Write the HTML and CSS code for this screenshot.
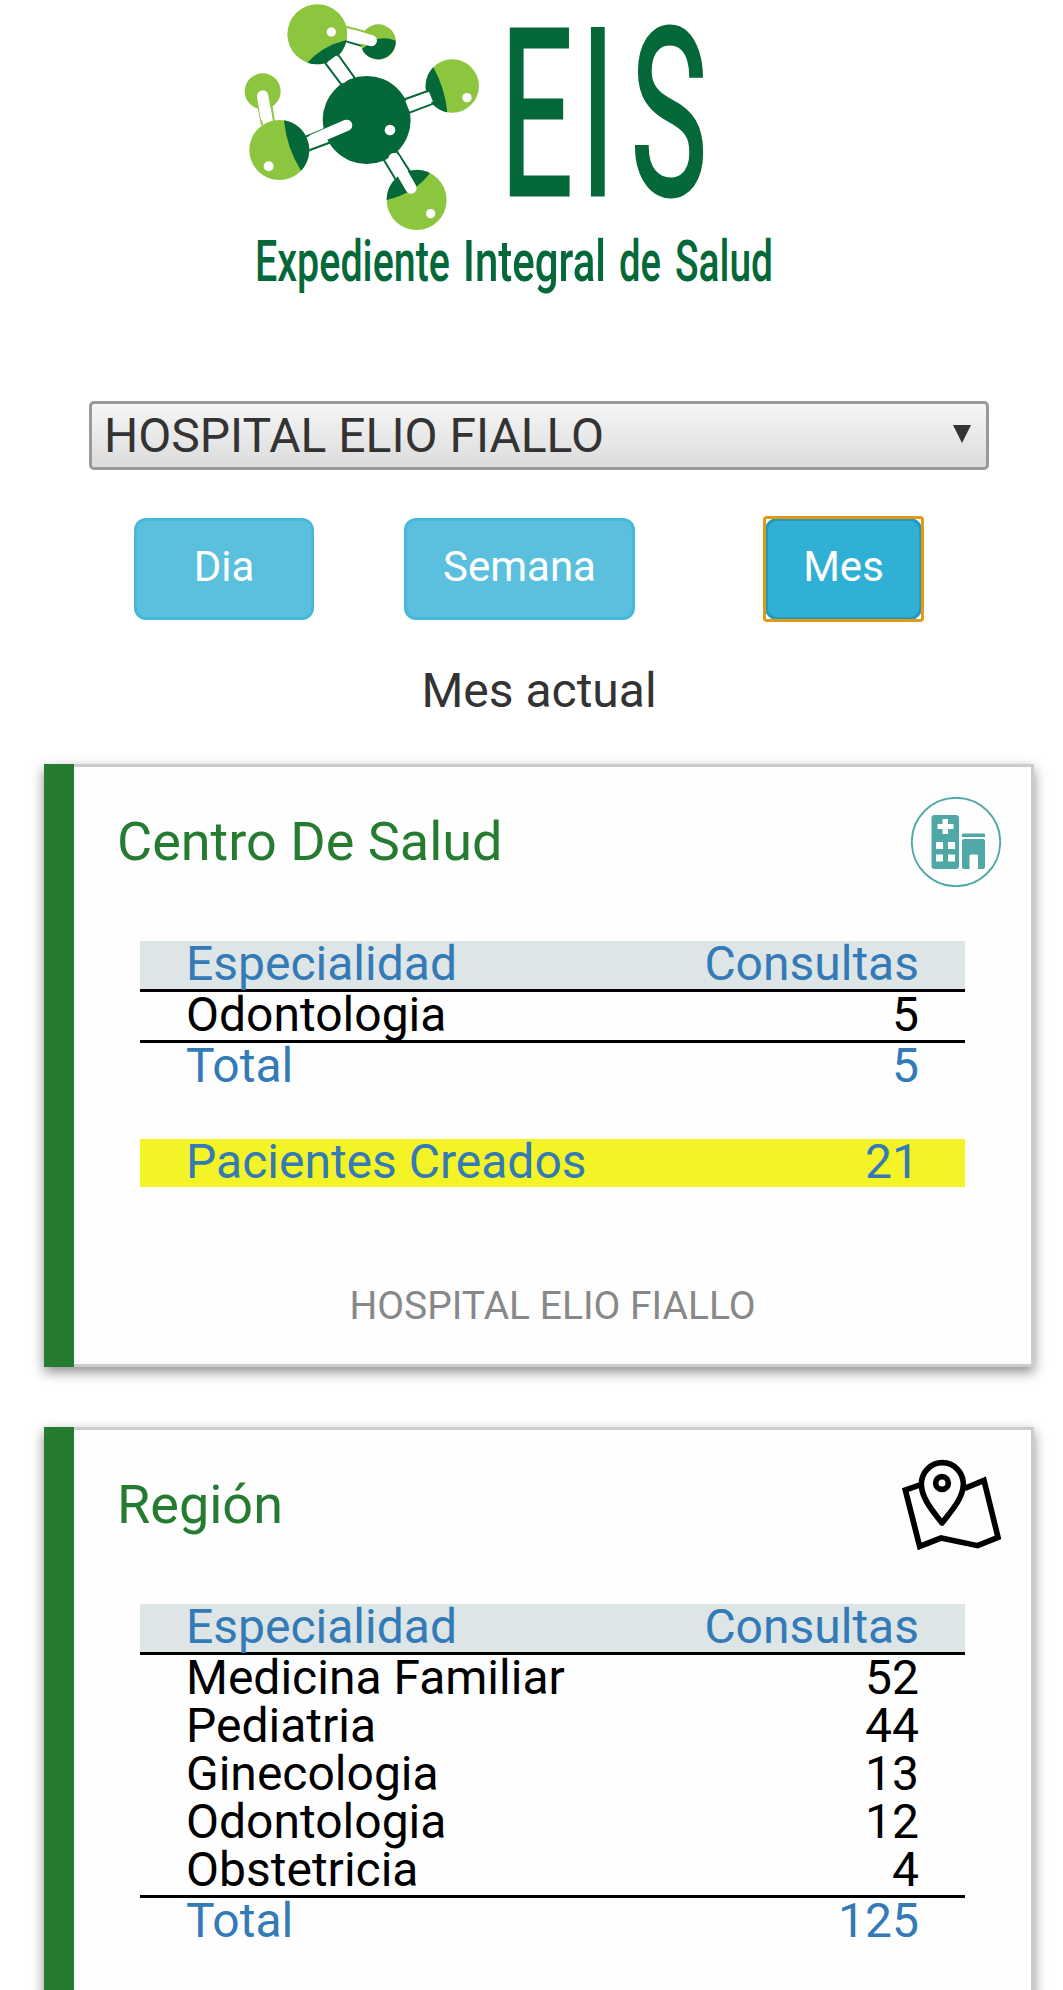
FILE: index.html
```
<!DOCTYPE html>
<html lang="es">
<head>
    <meta charset="UTF-8">
    <meta name="viewport" content="width=device-width, initial-scale=1.0">
    <title>EIS</title>
    <link rel="stylesheet" href="styles.css">
</head>
<body>
    <header class="logo">
        <svg width="540" height="310" viewBox="240 0 540 310">
            <g transform="translate(230 0) scale(0.3333)">
                <!-- bonds -->
                <g stroke="#056839" stroke-width="6">
                    <path d="M282 184L336 256M325 165L382 245"/>
                    <path d="M510 303L610 267M525 343L620 307"/>
                    <path d="M458 474L510 560M497 449L550 530"/>
                    <path d="M220 413L310 376M232 453L320 420"/>
                    <path d="M340 122L420 145"/>
                </g>
                <path d="M340 78L420 100M82 300L96 375M120 290L133 370" stroke="#8cc63f" stroke-width="6"/>
                <!-- atoms -->
                <g fill="#8cc63f">
                    <circle cx="445" cy="126" r="53"/>
                    <circle cx="262" cy="103" r="90"/>
                    <circle cx="667" cy="258" r="80"/>
                    <circle cx="98" cy="274" r="54"/>
                    <circle cx="148" cy="450" r="90"/>
                    <circle cx="560" cy="600" r="90"/>
                </g>
                <g fill="#056839">
                    <circle cx="410" cy="360" r="132"/>
                    <path d="M232 188Q278 137 350 120A90 90 0 0 1 232 188Z"/>
                    <path d="M497 122Q460 108 430 122L396 147A53 53 0 0 0 497 122Z"/>
                    <path d="M610 202Q645 265 652 337A80 80 0 0 1 610 202Z"/>
                    <path d="M162 361Q170 445 213 512A90 90 0 0 0 162 361Z"/>
                    <path d="M470 600Q555 580 600 519A90 90 0 0 0 470 600Z"/>
                </g>
                <g stroke="#fff" stroke-width="34" stroke-linecap="round">
                    <path d="M424 122L368 106"/>
                    <path d="M98 288L108 350"/>
                    <path d="M350 376L250 419"/>
                    <path d="M543 564L492 476"/>
                </g>
                <circle cx="262" cy="103" r="90" fill="none"/>
                <path d="M306 176L354 240M532 318L603 290" stroke="#fff" stroke-width="32"/>
                <g fill="#fff">
                    <circle cx="304" cy="96" r="14"/>
                    <circle cx="711" cy="293" r="14"/>
                    <circle cx="480" cy="390" r="16"/>
                    <circle cx="116" cy="499" r="15"/>
                    <circle cx="602" cy="641" r="14"/>
                </g>
            </g>
            <text class="brand" transform="translate(0 195) scale(0.55 1)" x="909 1055 1147">EIS</text>
            <text class="tagline" y="281"><tspan x="255" textLength="195" lengthAdjust="spacingAndGlyphs">Expediente</tspan> <tspan x="463" textLength="143" lengthAdjust="spacingAndGlyphs">Integral</tspan> <tspan x="619" textLength="42" lengthAdjust="spacingAndGlyphs">de</tspan> <tspan x="675" textLength="98" lengthAdjust="spacingAndGlyphs">Salud</tspan></text>
        </svg>
    </header>

    <div class="select-box">
        <select class="centro" id="centro">
            <option>HOSPITAL ELIO FIALLO</option>
        </select>
        <svg class="arrow" width="18" height="18" viewBox="0 0 18 18"><path d="M0 0H18L9 18Z" fill="#333"/></svg>
    </div>

    <div class="buttons">
        <button class="btn dia">Dia</button>
        <button class="btn semana">Semana</button>
        <button class="btn mes active">Mes</button>
    </div>

    <h3 class="periodo">Mes actual</h3>

    <div class="card">
        <div class="card-head">
            <h2>Centro De Salud</h2>
            <svg class="icon" width="90" height="90" viewBox="0 0 90 90">
                <circle cx="45" cy="45" r="44.2" fill="none" stroke="#4fa8a5" stroke-width="1.8"/>
                <rect x="20.5" y="18" width="27.5" height="54" rx="3" fill="#4fa8a5"/>
                <path d="M31.5 22H37V27H42.5V32H37V37H31.5V32H26.5V27H31.5Z" fill="#fff"/>
                <path d="M25 45h7v7h-7zM37 45h7v7h-7zM25 57.5h7v7h-7zM37 57.5h7v7h-7z" fill="#fff"/>
                <path d="M52 36.5H73a1 1 0 0 1 1 1V40H51V37.5a1 1 0 0 1 1-1Z" fill="#4fa8a5"/>
                <path d="M53 42H72a2 2 0 0 1 2 2V70a2 2 0 0 1-2 2H67V59a1.500 1.500 0 0 0-1.500-1.500H60A1.500 1.500 0 0 0 58.500 59V72H53a2 2 0 0 1-2-2V44a2 2 0 0 1 2-2Z" fill="#4fa8a5"/>
            </svg>
        </div>
        <div class="tabla">
            <div class="fila cabecera"><span>Especialidad</span><span>Consultas</span></div>
            <div class="fila ultima"><span>Odontologia</span><span>5</span></div>
            <div class="fila total"><span>Total</span><span>5</span></div>
            <div class="fila creados"><span>Pacientes Creados</span><span>21</span></div>
        </div>
        <p class="pie">HOSPITAL ELIO FIALLO</p>
    </div>

    <div class="card">
        <div class="card-head">
            <h2>Región</h2>
            <svg class="icon" width="100" height="92" viewBox="63 57 300 276" fill="none" stroke="#000" stroke-width="17">
                <path d="M122 134L76 150L119 319L183 294L293 317L354 292L312 121L254 145"/>
                <path d="M186 249C160 215 124 175 124 133A62 64 0 0 1 250 133C250 175 212 215 186 249Z" stroke-linejoin="round"/>
                <circle cx="186" cy="129" r="19"/>
            </svg>
        </div>
        <div class="tabla">
            <div class="fila cabecera"><span>Especialidad</span><span>Consultas</span></div>
            <div class="fila"><span>Medicina Familiar</span><span>52</span></div>
            <div class="fila"><span>Pediatria</span><span>44</span></div>
            <div class="fila"><span>Ginecologia</span><span>13</span></div>
            <div class="fila"><span>Odontologia</span><span>12</span></div>
            <div class="fila ultima"><span>Obstetricia</span><span>4</span></div>
            <div class="fila total"><span>Total</span><span>125</span></div>
        </div>
    </div>
</body>
</html>
```
FILE: styles.css
```
* {
    box-sizing: border-box;
}

body {
    margin: 0;
    height: 1990px;
    overflow: hidden;
    background-color: #fff;
    font-family: Roboto, "Liberation Sans", sans-serif;
    font-size: 48px;
    color: #333;
}

.logo {
    height: 401px;
    padding-left: 240px;
}

.logo svg {
    display: block;
}

.brand {
    font-size: 234px;
    fill: #056839;
    stroke: #056839;
    stroke-width: 3px;
}

.tagline {
    font-size: 57px;
    font-weight: 500;
    fill: #056839;
}

.select-box {
    position: relative;
    width: 900px;
    height: 69px;
    margin-left: 89px;
}

.centro {
    appearance: none;
    display: block;
    width: 100%;
    height: 69px;
    padding: 0 12px;
    border: 3px solid #999;
    border-radius: 5px;
    background: linear-gradient(#f6f6f6, #dcdcdc);
    font-family: inherit;
    font-size: 48px;
    color: #333;
}

.arrow {
    position: absolute;
    right: 18px;
    top: 24px;
}

.buttons {
    display: flex;
    padding: 48px 0 0 134px;
}

.btn {
    height: 102px;
    padding: 0 0 6px;
    border: 3px solid #46b8da;
    border-radius: 12px;
    background-color: #5bc0de;
    color: #fff;
    font-family: inherit;
    font-size: 42px;
}

.dia {
    width: 180px;
}

.semana {
    width: 231px;
    margin-left: 90px;
}

.mes {
    position: relative;
    width: 157px;
    margin-left: 130px;
}

.btn.active {
    background-color: #31b0d5;
    border-color: #269abc;
}

/* focus ring, squarer than the button */
.btn.active::after {
    content: "";
    position: absolute;
    top: -5px;
    right: -5px;
    bottom: -5px;
    left: -5px;
    border: 3px solid #e09a14;
    border-radius: 4px;
}

.periodo {
    margin: 43px 0 0 89px;
    width: 900px;
    height: 101px;
    line-height: 56px;
    font-size: 48px;
    font-weight: 400;
    text-align: center;
}

/* the green bar covers the full height, borders included */
.card {
    width: 990px;
    height: 603px;
    margin: 0 0 60px 44px;
    border: 3px solid #ccc;
    border-left: 30px solid #257b30;
    border-image: linear-gradient(to right, #257b30 30px, #ccc 30px) 3 3 3 30;
    box-shadow: 0 5px 12px rgba(0, 0, 0, 0.45);
    background-color: #fefefe;
}

.card-head {
    display: flex;
    justify-content: space-between;
    align-items: center;
    height: 90px;
    margin: 30px 30px 0 43px;
}

.card-head h2 {
    margin: 0;
    padding-bottom: 2px;
    font-size: 54px;
    font-weight: 400;
    color: #257b30;
}

.tabla {
    width: 825px;
    margin: 54px 0 0 66px;
}

.fila {
    display: flex;
    justify-content: space-between;
    height: 48px;
    padding: 0 46px;
    line-height: 46px;
    color: #000;
}

.cabecera {
    height: 51px;
    background-color: #dde5e6;
    border-bottom: 3px solid #000;
    color: #337ab7;
}

.ultima {
    height: 51px;
    border-bottom: 3px solid #000;
}

.total {
    color: #337ab7;
}

.creados {
    margin-top: 48px;
    background-color: #f3f326;
    color: #337ab7;
}

.pie {
    margin: 95px 0 0;
    line-height: 48px;
    font-size: 39px;
    text-align: center;
    color: #888;
}
```
